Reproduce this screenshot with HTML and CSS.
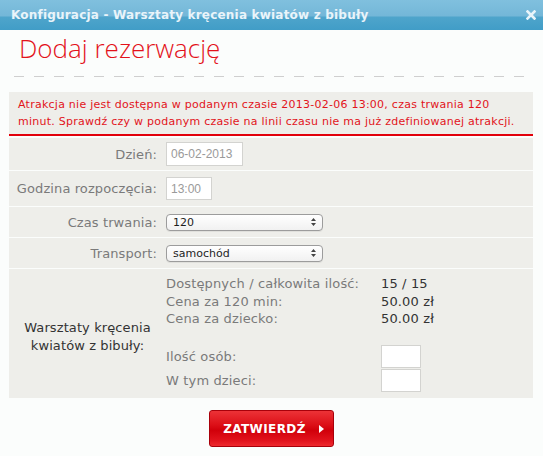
FILE: index.html
```html
<!DOCTYPE html>
<html lang="pl">
<head>
<meta charset="utf-8">
<title>Dodaj rezerwację</title>
<link rel="stylesheet" href="styles.css">
</head>
<body>
<div class="dialog">
  <div class="titlebar">
    <span class="title">Konfiguracja - Warsztaty kręcenia kwiatów z bibuły</span>
    <svg class="close" width="10" height="10" viewBox="0 0 10 10"><path d="M1.5 1.5 L8.5 8.5 M8.5 1.5 L1.5 8.5" stroke="#e9f4fa" stroke-width="2.6" stroke-linecap="square"/></svg>
  </div>
  <div class="content">
    <h1 class="heading">Dodaj rezerwację</h1>
    <div class="dashes"></div>
    <div class="error">Atrakcja nie jest dostępna w podanym czasie 2013-02-06 13:00, czas trwania 120 minut. Sprawdź czy w podanym czasie na linii czasu nie ma już zdefiniowanej atrakcji.</div>
    <div class="form">
      <div class="row row-day">
        <label class="lbl">Dzień:</label>
        <input class="txt txt-date" type="text" value="06-02-2013">
      </div>
      <div class="row row-hour">
        <label class="lbl">Godzina rozpoczęcia:</label>
        <input class="txt txt-hour" type="text" value="13:00">
      </div>
      <div class="row row-sel">
        <label class="lbl">Czas trwania:</label>
        <div class="sel"><span class="sel-text">120</span><svg class="arrows" width="5" height="8" viewBox="0 0 5 8"><path d="M0 3 L2.5 0 L5 3 Z M0 5 L2.5 8 L5 5 Z" fill="#444"/></svg></div>
      </div>
      <div class="row row-sel">
        <label class="lbl">Transport:</label>
        <div class="sel"><span class="sel-text">samochód</span><svg class="arrows" width="5" height="8" viewBox="0 0 5 8"><path d="M0 3 L2.5 0 L5 3 Z M0 5 L2.5 8 L5 5 Z" fill="#444"/></svg></div>
      </div>
      <div class="row row-attr">
        <div class="attr-name">Warsztaty kręcenia<br>kwiatów z bibuły:</div>
        <div class="attr-info">
          <div class="info-line"><span class="info-k">Dostępnych / całkowita ilość:</span><span class="info-v">15 / 15</span></div>
          <div class="info-line"><span class="info-k">Cena za 120 min:</span><span class="info-v">50.00 zł</span></div>
          <div class="info-line"><span class="info-k">Cena za dziecko:</span><span class="info-v">50.00 zł</span></div>
          <div class="qty qty-first"><span class="info-k">Ilość osób:</span><input class="txt txt-qty" type="text"></div>
          <div class="qty"><span class="info-k">W tym dzieci:</span><input class="txt txt-qty" type="text"></div>
        </div>
      </div>
    </div>
    <div class="actions">
      <button class="btn" type="button">ZATWIERDŹ<svg class="btn-arrow" width="5" height="8" viewBox="0 0 5 8"><path d="M0 0 L5 4 L0 8 Z" fill="#fff"/></svg></button>
    </div>
  </div>
</div>
</body>
</html>
```
FILE: styles.css
```css
html, body {
  margin: 0;
  padding: 0;
  background: #fbfdfc;
}
body {
  width: 543px;
  height: 456px;
  overflow: hidden;
  font-family: "DejaVu Sans", Verdana, sans-serif;
}
.titlebar {
  height: 30px;
  display: flex;
  align-items: center;
  justify-content: space-between;
  padding: 0 7px 0 11px;
  background: linear-gradient(to bottom, #80c0de 0%, #74b7d8 52%, #4ea4cb 58%, #419dc7 100%);
}
.title {
  color: #e9f4fa;
  font-weight: bold;
  font-size: 12px;
  letter-spacing: 0.2px;
}
.close {
  display: block;
  margin-top: -1px;
}
.content {
  padding: 0 10px 0 9px;
}
.heading {
  margin: 1px 0 0 10px;
  font-family: "Open Sans", "DejaVu Sans", sans-serif;
  font-weight: 300;
  font-size: 26px;
  line-height: 35px;
  color: #e3121a;
}
.dashes {
  margin: 10px 0 0 5px;
  width: 510px;
  height: 1px;
  background: repeating-linear-gradient(to right, #cfcfcf 0 10px, transparent 10px 20px);
}
.error {
  margin-top: 15px;
  background: #eeeeea;
  border-bottom: 2px solid #e2000b;
  color: #e2141b;
  font-size: 11px;
  letter-spacing: 0.25px;
  line-height: 17px;
  padding: 4px 9px 4px 9px;
}
.form {
  margin-top: 2px;
  display: flex;
  flex-direction: column;
  gap: 1px;
}
.row {
  background: #eeeeea;
  display: flex;
  align-items: center;
}
.row-day { height: 32px; }
.row-hour { height: 35px; }
.row-sel { height: 30px; }
.lbl {
  width: 148px;
  text-align: right;
  color: #7a7a7a;
  font-size: 13px;
  letter-spacing: 0.1px;
  white-space: nowrap;
  margin-right: 9px;
}
.txt {
  box-sizing: border-box;
  border: 1px solid #d3d3d0;
  background: #fff;
  font-family: "Liberation Sans", Arial, sans-serif;
  font-size: 12px;
  color: #9a9a9a;
  padding: 0 4px;
  margin: 0;
  outline: none;
}
.txt-date { width: 77px; height: 24px; }
.txt-hour { width: 46px; height: 23px; }
.sel {
  box-sizing: border-box;
  width: 157px;
  height: 17px;
  border: 1px solid #9c9c9c;
  border-radius: 4px;
  background: linear-gradient(to bottom, #ffffff, #f1f1f1);
  display: flex;
  align-items: center;
  justify-content: space-between;
  padding: 0 6px 0 6px;
  box-shadow: 0 1px 0 rgba(0,0,0,0.06);
}
.sel-text {
  font-size: 11px;
  color: #1e1e1e;
  line-height: 15px;
}
.arrows { display: block; }
.row-attr {
  height: 129px;
  align-items: stretch;
}
.attr-name {
  width: 157px;
  margin-right: 0;
  text-align: center;
  align-self: center;
  padding-top: 6px;
  color: #333;
  font-size: 13px;
  letter-spacing: 0.1px;
  line-height: 18px;
}
.attr-info {
  padding-top: 6px;
  font-size: 13px;
  letter-spacing: 0.15px;
}
.info-line {
  display: flex;
  line-height: 17.5px;
}
.info-k {
  width: 215px;
  color: #7a7a7a;
  white-space: nowrap;
}
.info-v {
  color: #333;
}
.qty {
  display: flex;
  align-items: center;
}
.qty-first {
  margin-top: 17px;
}
.qty + .qty { margin-top: 1px; }
.txt-qty {
  width: 40px;
  height: 23px;
}
.actions {
  display: flex;
  justify-content: center;
  padding-top: 12px;
  padding-left: 1px;
}
.btn {
  box-sizing: border-box;
  width: 125px;
  height: 37px;
  border: 1px solid #a8000a;
  border-radius: 3px;
  background: linear-gradient(to bottom, #ec3237 0%, #dc0f17 40%, #d1000a 55%, #e2141d 85%, #ee2a2e 100%);
  color: #fff;
  font-family: "DejaVu Sans", Verdana, sans-serif;
  font-weight: bold;
  font-size: 12px;
  letter-spacing: 0.4px;
  display: flex;
  align-items: center;
  justify-content: center;
  gap: 13px;
  padding: 0 0 0 4px;
  cursor: pointer;
}
.btn-arrow { display: block; }
```
